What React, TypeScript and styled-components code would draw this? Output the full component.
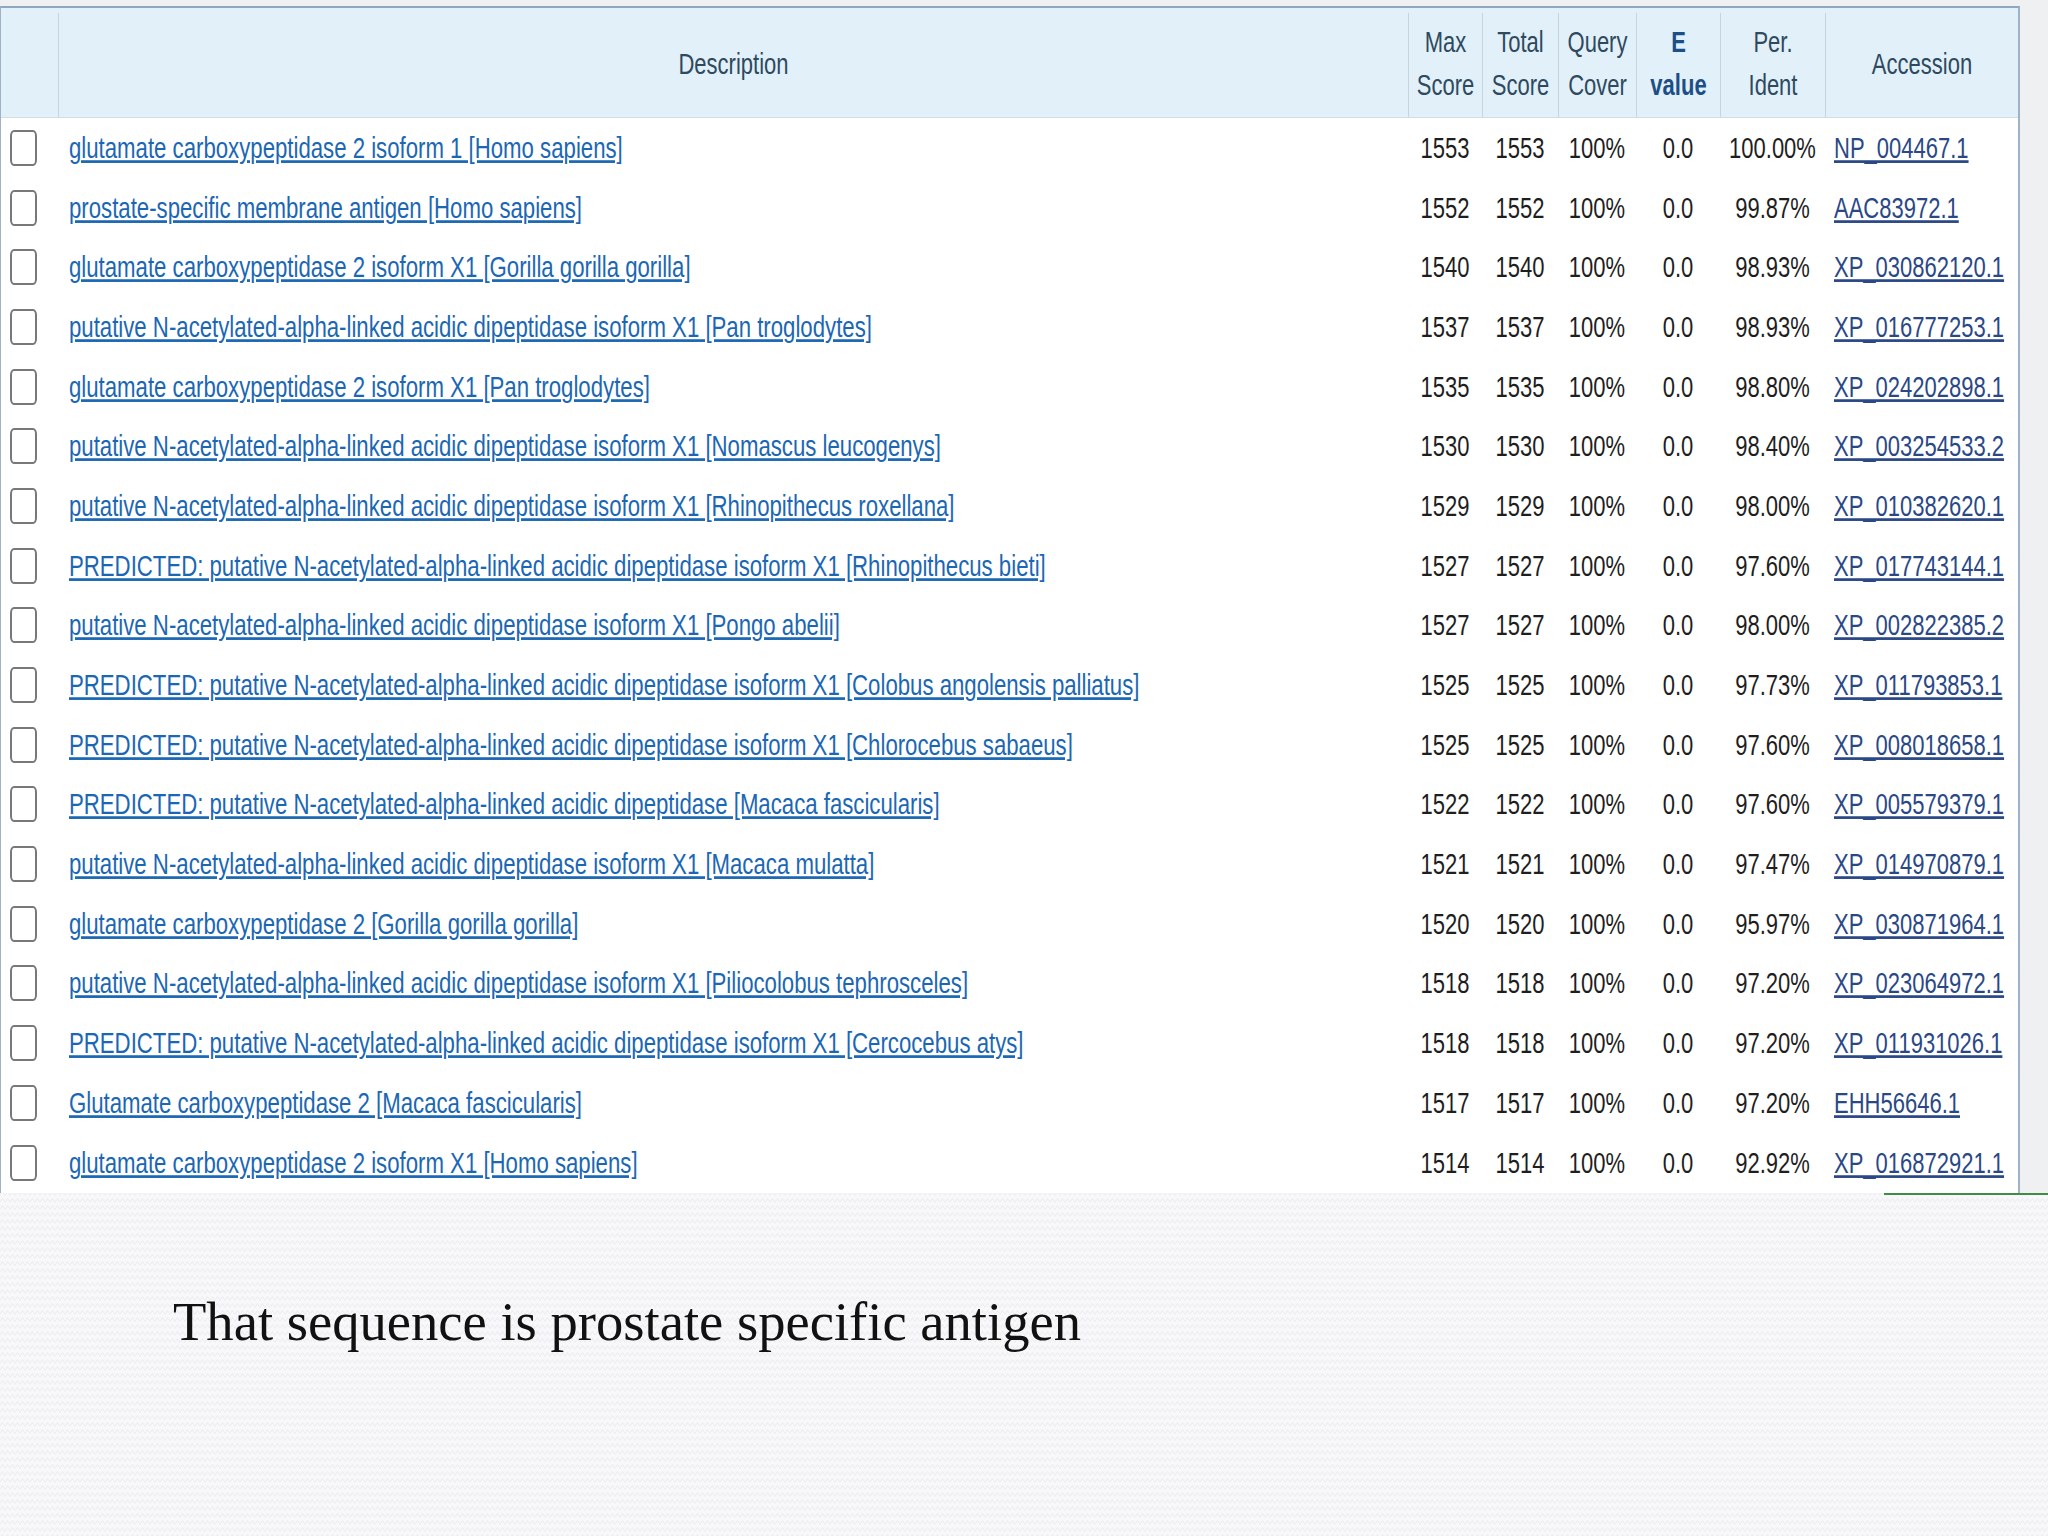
import React from "react";
import styled, { createGlobalStyle } from "styled-components";

const texture =
  "url(\"data:image/svg+xml,%3Csvg xmlns='http://www.w3.org/2000/svg' width='10' height='7'%3E%3Cpath d='M0 5.5 L2.5 1.5 L5 5.5 L7.5 1.5 L10 5.5' fill='none' stroke='%23e9e9ee' stroke-width='0.8'/%3E%3C/svg%3E\")";

const GlobalStyle = createGlobalStyle`
  html, body {
    margin: 0;
    padding: 0;
  }
  body {
    background: #f8f8fa;
    font-family: "Liberation Sans", Arial, sans-serif;
  }
`;

const Page = styled.div`
  width: 2048px;
  height: 1536px;
  overflow: hidden;
  display: flex;
  flex-direction: column;
  background-color: #f8f8fa;
  background-image: ${texture};
`;

const Capture = styled.div`
  height: 1193px;
  box-sizing: border-box;
  padding-top: 6px;
  background: #eef0f2;
  display: flex;
`;

const Results = styled.div`
  width: 2020px;
  box-sizing: border-box;
  background: #ffffff;
  border-top: 2px solid #90a7be;
  border-left: 1px solid #9fb2c6;
  border-right: 2px solid #9fb2c6;
  display: flex;
  flex-direction: column;
`;

const columns = "57px 1350px 74px 76px 78px 84px 105px 193px";

const HeadRow = styled.div`
  display: grid;
  grid-template-columns: ${columns};
  height: 110px;
  box-sizing: border-box;
  padding-top: 5px;
  background: #e2f1f9;
  border-bottom: 1px solid #d3dde6;
`;

const HeadCell = styled.div<{ $first?: boolean }>`
  display: flex;
  align-items: center;
  justify-content: center;
  text-align: center;
  padding-bottom: 3px;
  border-left: ${(p) => (p.$first ? "none" : "1px solid #c7d5df")};
  color: #2e4960;
  font-size: 22px;
`;

const Tall = styled.span<{ $lh?: number }>`
  display: inline-block;
  transform: scaleY(1.36);
  line-height: ${(p) => (p.$lh ? `${p.$lh}px` : "normal")};
`;

const Strong = styled.b`
  color: #1c4e88;
  font-weight: 700;
`;

const BodyRow = styled.div`
  display: grid;
  grid-template-columns: ${columns};
  height: 59.7px;
`;

const Cell = styled.div<{ $align?: "left" | "center" }>`
  display: flex;
  align-items: center;
  justify-content: ${(p) => (p.$align === "left" ? "flex-start" : "center")};
  padding-left: ${(p) => (p.$align === "left" ? "11px" : "0")};
  font-size: 22px;
  color: #1e1e1e;
  white-space: nowrap;
`;

const DescCell = styled(Cell)`
  font-size: 22.2px;
`;

const AccCell = styled(Cell)`
  padding-left: 9px;
`;

const BoxCell = styled.div`
  display: flex;
  align-items: center;
  padding-left: 9px;
`;

const CheckBox = styled.span`
  display: block;
  width: 27px;
  height: 36px;
  box-sizing: border-box;
  border: 2px solid #787878;
  border-radius: 4px / 6px;
  background: #ffffff;
`;

const DescLink = styled.a`
  color: #1b67b4;
  text-decoration: underline;
`;

const AccLink = styled.a`
  color: #2a4886;
  text-decoration: underline;
`;

const RuleRow = styled.div`
  display: flex;
  justify-content: flex-end;
`;

const GreenRule = styled.div`
  width: 164px;
  height: 2px;
  background: #3f8d45;
`;

const Caption = styled.p`
  margin: 100px 0 0 0;
  padding-left: 173px;
  font-family: "Liberation Serif", "Times New Roman", serif;
  font-size: 54.6px;
  line-height: 1;
  color: #111111;
`;

type Hit = [string, string, string, string, string, string, string];

const hits: Hit[] = [
  ["glutamate carboxypeptidase 2 isoform 1 [Homo sapiens]", "1553", "1553", "100%", "0.0", "100.00%", "NP_004467.1"],
  ["prostate-specific membrane antigen [Homo sapiens]", "1552", "1552", "100%", "0.0", "99.87%", "AAC83972.1"],
  ["glutamate carboxypeptidase 2 isoform X1 [Gorilla gorilla gorilla]", "1540", "1540", "100%", "0.0", "98.93%", "XP_030862120.1"],
  ["putative N-acetylated-alpha-linked acidic dipeptidase isoform X1 [Pan troglodytes]", "1537", "1537", "100%", "0.0", "98.93%", "XP_016777253.1"],
  ["glutamate carboxypeptidase 2 isoform X1 [Pan troglodytes]", "1535", "1535", "100%", "0.0", "98.80%", "XP_024202898.1"],
  ["putative N-acetylated-alpha-linked acidic dipeptidase isoform X1 [Nomascus leucogenys]", "1530", "1530", "100%", "0.0", "98.40%", "XP_003254533.2"],
  ["putative N-acetylated-alpha-linked acidic dipeptidase isoform X1 [Rhinopithecus roxellana]", "1529", "1529", "100%", "0.0", "98.00%", "XP_010382620.1"],
  ["PREDICTED: putative N-acetylated-alpha-linked acidic dipeptidase isoform X1 [Rhinopithecus bieti]", "1527", "1527", "100%", "0.0", "97.60%", "XP_017743144.1"],
  ["putative N-acetylated-alpha-linked acidic dipeptidase isoform X1 [Pongo abelii]", "1527", "1527", "100%", "0.0", "98.00%", "XP_002822385.2"],
  ["PREDICTED: putative N-acetylated-alpha-linked acidic dipeptidase isoform X1 [Colobus angolensis palliatus]", "1525", "1525", "100%", "0.0", "97.73%", "XP_011793853.1"],
  ["PREDICTED: putative N-acetylated-alpha-linked acidic dipeptidase isoform X1 [Chlorocebus sabaeus]", "1525", "1525", "100%", "0.0", "97.60%", "XP_008018658.1"],
  ["PREDICTED: putative N-acetylated-alpha-linked acidic dipeptidase [Macaca fascicularis]", "1522", "1522", "100%", "0.0", "97.60%", "XP_005579379.1"],
  ["putative N-acetylated-alpha-linked acidic dipeptidase isoform X1 [Macaca mulatta]", "1521", "1521", "100%", "0.0", "97.47%", "XP_014970879.1"],
  ["glutamate carboxypeptidase 2 [Gorilla gorilla gorilla]", "1520", "1520", "100%", "0.0", "95.97%", "XP_030871964.1"],
  ["putative N-acetylated-alpha-linked acidic dipeptidase isoform X1 [Piliocolobus tephrosceles]", "1518", "1518", "100%", "0.0", "97.20%", "XP_023064972.1"],
  ["PREDICTED: putative N-acetylated-alpha-linked acidic dipeptidase isoform X1 [Cercocebus atys]", "1518", "1518", "100%", "0.0", "97.20%", "XP_011931026.1"],
  ["Glutamate carboxypeptidase 2 [Macaca fascicularis]", "1517", "1517", "100%", "0.0", "97.20%", "EHH56646.1"],
  ["glutamate carboxypeptidase 2 isoform X1 [Homo sapiens]", "1514", "1514", "100%", "0.0", "92.92%", "XP_016872921.1"],
];

const LH = 31.6;

export default function App() {
  return (
    <>
      <GlobalStyle />
      <Page>
        <Capture>
          <Results>
            <HeadRow>
              <HeadCell $first />
              <HeadCell>
                <Tall>Description</Tall>
              </HeadCell>
              <HeadCell>
                <Tall $lh={LH}>Max<br />Score</Tall>
              </HeadCell>
              <HeadCell>
                <Tall $lh={LH}>Total<br />Score</Tall>
              </HeadCell>
              <HeadCell>
                <Tall $lh={LH}>Query<br />Cover</Tall>
              </HeadCell>
              <HeadCell>
                <Tall $lh={LH}>
                  <Strong>E<br />value</Strong>
                </Tall>
              </HeadCell>
              <HeadCell>
                <Tall $lh={LH}>Per.<br />Ident</Tall>
              </HeadCell>
              <HeadCell>
                <Tall>Accession</Tall>
              </HeadCell>
            </HeadRow>
            {hits.map((h, i) => (
              <BodyRow key={i}>
                <BoxCell>
                  <CheckBox />
                </BoxCell>
                <DescCell $align="left">
                  <Tall>
                    <DescLink href="#">{h[0]}</DescLink>
                  </Tall>
                </DescCell>
                <Cell><Tall>{h[1]}</Tall></Cell>
                <Cell><Tall>{h[2]}</Tall></Cell>
                <Cell><Tall>{h[3]}</Tall></Cell>
                <Cell><Tall>{h[4]}</Tall></Cell>
                <Cell><Tall>{h[5]}</Tall></Cell>
                <AccCell $align="left">
                  <Tall>
                    <AccLink href="#">{h[6]}</AccLink>
                  </Tall>
                </AccCell>
              </BodyRow>
            ))}
          </Results>
        </Capture>
        <RuleRow>
          <GreenRule />
        </RuleRow>
        <Caption>That sequence is prostate specific antigen</Caption>
      </Page>
    </>
  );
}
